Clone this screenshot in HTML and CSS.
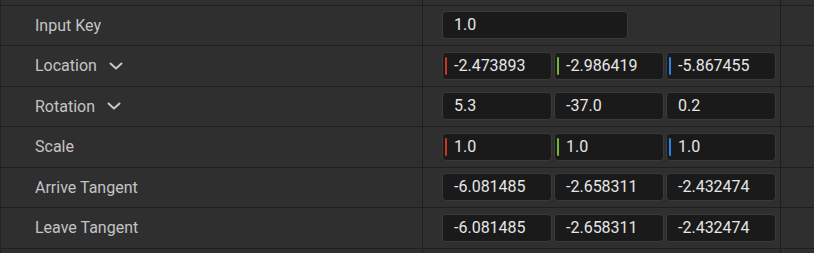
FILE: index.html
```html
<!DOCTYPE html>
<html lang="en">
<head>
    <meta charset="UTF-8">
    <meta name="viewport" content="width=device-width, initial-scale=1.0">
    <title>Spline Point Details</title>
    <link rel="stylesheet" href="styles.css">
</head>
<body>
    <div class="details">
        <div class="row row-cut">
            <div class="name"></div>
            <div class="value"></div>
            <div class="extra"></div>
        </div>

        <div class="row">
            <div class="name">Input Key</div>
            <div class="value">
                <div class="field field-wide">1.0</div>
            </div>
            <div class="extra"></div>
        </div>

        <div class="row">
            <div class="name">
                Location
                <svg class="chevron" width="14" height="8" viewBox="0 0 14 8" aria-hidden="true">
                    <polyline points="1.5,1.5 7,6.5 12.5,1.5" />
                </svg>
            </div>
            <div class="value">
                <div class="field"><span class="axis axis-x"></span>-2.473893</div>
                <div class="field"><span class="axis axis-y"></span>-2.986419</div>
                <div class="field"><span class="axis axis-z"></span>-5.867455</div>
            </div>
            <div class="extra"></div>
        </div>

        <div class="row">
            <div class="name">
                Rotation
                <svg class="chevron" width="14" height="8" viewBox="0 0 14 8" aria-hidden="true">
                    <polyline points="1.5,1.5 7,6.5 12.5,1.5" />
                </svg>
            </div>
            <div class="value">
                <div class="field">5.3</div>
                <div class="field">-37.0</div>
                <div class="field">0.2</div>
            </div>
            <div class="extra"></div>
        </div>

        <div class="row">
            <div class="name">Scale</div>
            <div class="value">
                <div class="field"><span class="axis axis-x"></span>1.0</div>
                <div class="field"><span class="axis axis-y"></span>1.0</div>
                <div class="field"><span class="axis axis-z"></span>1.0</div>
            </div>
            <div class="extra"></div>
        </div>

        <div class="row">
            <div class="name">Arrive Tangent</div>
            <div class="value">
                <div class="field">-6.081485</div>
                <div class="field">-2.658311</div>
                <div class="field">-2.432474</div>
            </div>
            <div class="extra"></div>
        </div>

        <div class="row">
            <div class="name">Leave Tangent</div>
            <div class="value">
                <div class="field">-6.081485</div>
                <div class="field">-2.658311</div>
                <div class="field">-2.432474</div>
            </div>
            <div class="extra"></div>
        </div>

        <div class="row row-cut">
            <div class="name"></div>
            <div class="value"></div>
            <div class="extra"></div>
        </div>
    </div>
</body>
</html>
```

FILE: styles.css
```css
body {
    margin: 0;
    background-color: #2f2f2f;
    font-family: Roboto, "Liberation Sans", sans-serif;
    font-size: 16px;
    overflow: hidden;
}

.details {
    display: flex;
    flex-direction: column;
}

.row {
    display: grid;
    grid-template-columns: 423px 358px 1fr;
    height: 40.5px;
    box-sizing: border-box;
    border-bottom: 1px solid #1f1f1f;
    background-color: #2f2f2f;
}

.row-cut {
    height: 5.5px;
}

.name {
    display: flex;
    align-items: center;
    gap: 12px;
    padding-left: 34px;
    color: #c4c4c4;
    border-left: 1px solid #222222;
    border-right: 1px solid #1f1f1f;
}

.chevron {
    fill: none;
    stroke: #c8c8c8;
    stroke-width: 2;
    stroke-linecap: round;
    stroke-linejoin: round;
}

.value {
    display: flex;
    align-items: center;
    gap: 2px;
    padding-left: 19px;
    border-right: 1px solid #1f1f1f;
}

.field {
    position: relative;
    display: flex;
    align-items: center;
    width: 110px;
    height: 28px;
    box-sizing: border-box;
    padding-left: 11px;
    padding-bottom: 1px;
    background-color: #1a1a1a;
    border: 1px solid #3a3a3a;
    border-radius: 4px;
    color: #e6e6e6;
}

.field-wide {
    width: 186px;
}

/* axis colour tick on the left edge of vector fields */
.axis {
    position: absolute;
    left: 2px;
    top: 4px;
    bottom: 4px;
    width: 2px;
    border-radius: 1px;
}

.axis-x {
    background-color: #c9361f;
}

.axis-y {
    background-color: #74b43a;
}

.axis-z {
    background-color: #2f82e8;
}
```
